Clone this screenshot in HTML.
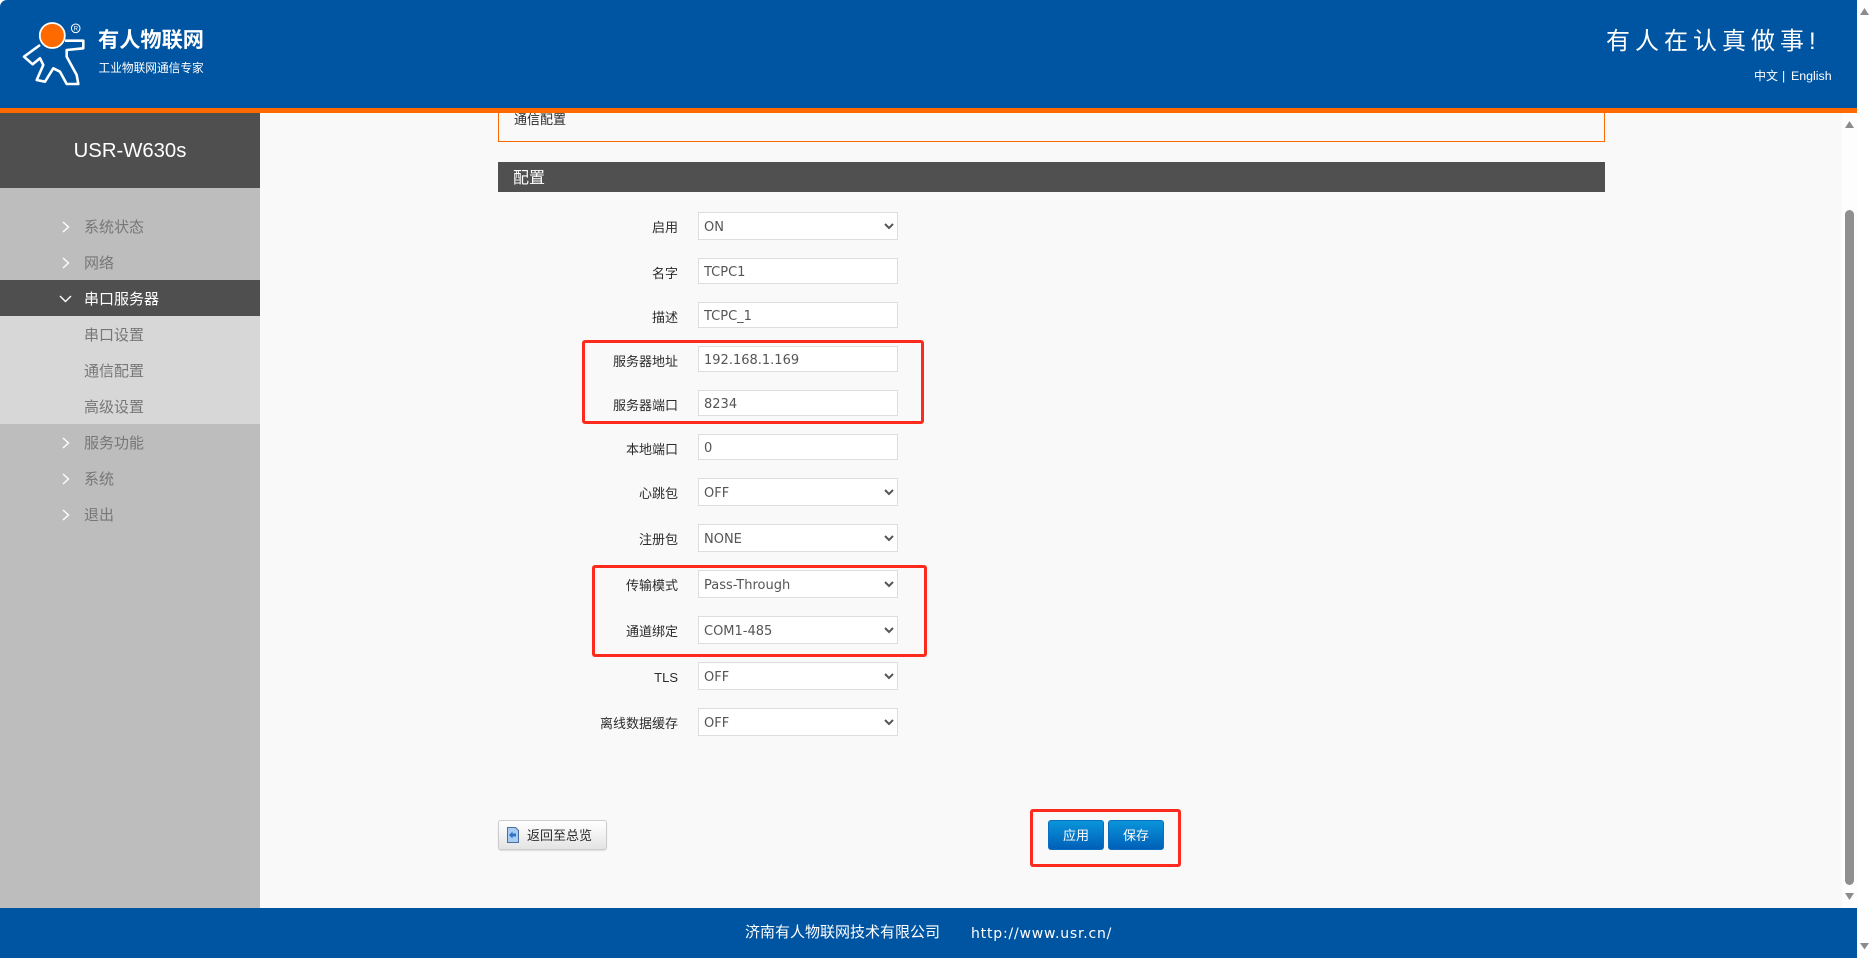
<!DOCTYPE html>
<html lang="zh-CN">
<head>
<meta charset="utf-8">
<title>USR-W630s</title>
<style>
html,body{margin:0;padding:0;width:1872px;height:958px;overflow:hidden;background:#fff;}
body{position:relative;font-family:"Liberation Sans","Noto Sans CJK SC",sans-serif;color:#333;}
.a{position:absolute;white-space:nowrap;}
#hdr{left:0;top:0;width:1857px;height:108px;background:#0055a2;border-radius:7px 0 0 0;}
#org{left:0;top:108px;width:1857px;height:5px;background:#ff6a00;}
#main{left:260px;top:113px;width:1582px;height:795px;background:#f9f9f9;}
#sb1{left:1842px;top:113px;width:15px;height:795px;background:#fdfdfd;}
#side{left:0;top:113px;width:260px;height:795px;background:#bdbdbd;}
#ttl{left:0;top:114px;width:260px;height:74px;background:#4f4f4f;color:#fff;font-size:20.300px;line-height:75px;text-align:center;box-shadow:0 -1px 0 #4f4f4f;}
#ftr{left:0;top:908px;width:1857px;height:50px;background:#0055a2;}
.m{left:0;width:260px;height:36px;line-height:36px;font-size:15px;color:#777;}
.m span{position:absolute;left:84px;top:2px;}
.m svg{position:absolute;left:58px;top:11px;}
.l{left:400px;width:278px;text-align:right;font-size:13px;line-height:20px;height:20px;color:#2b2b2b;margin-top:1px;}
.f{left:698px;width:200px;box-sizing:border-box;border:1px solid #ddd;background:#fff;margin:0;font-family:"DejaVu Sans",sans-serif;font-size:13px;color:#555;outline:none;border-radius:0;}
input.f{height:26px;padding:2px 0 0 5px;}
select.f{height:28px;padding:2px 0 0 1px;}
.r{box-sizing:border-box;border:3px solid #ff2a1e;border-radius:3px;}
.b{top:820px;height:30px;width:56px;box-sizing:border-box;border:1px solid #0a6fc0;border-radius:3px;background:linear-gradient(#0a95da,#005fb8);color:#fff;font-size:13px;line-height:30px;text-align:center;}
</style>
</head>
<body>
<div class="a" id="main"></div>
<div class="a" id="sb1"></div>

<div class="a" style="left:498px;top:100px;width:1107px;height:42px;box-sizing:border-box;border:1px solid #ff6a00;border-top:0;"></div>
<div class="a" style="left:514px;top:110px;font-size:13px;line-height:20px;color:#2b2b2b;">通信配置</div>
<div class="a" id="org"></div>
<div class="a" id="hdr"></div>

<svg class="a" style="left:0;top:0" width="120" height="100" viewBox="0 0 120 100">
<path d="M40 45 24 56.700 32.700 64.300 40 58.300 43.300 65 36.700 80 45 81.700 53.300 68.300 60 71.700 66.700 84 78.300 84 76.700 75 66.700 56.700 66.700 50 83.300 48.300 83.300 40.700 65 40.700" fill="none" stroke="#fff" stroke-width="2.600" stroke-linejoin="round"/>
<circle cx="52.300" cy="35.500" r="12.500" fill="#ff6a00" stroke="#fff" stroke-width="1.800"/>
<circle cx="75.700" cy="28.300" r="4.300" fill="none" stroke="#fff" stroke-width="1"/>
<text x="75.700" y="30.600" font-size="6.200" fill="#fff" text-anchor="middle" font-family="Liberation Sans">R</text>
</svg>
<div class="a" style="left:98px;top:27px;font-size:21.200px;line-height:28px;font-weight:700;color:#fff;">有人物联网</div>
<div class="a" style="left:98.500px;top:59px;font-size:11.700px;line-height:20px;color:#fff;">工业物联网通信专家</div>
<div class="a" style="left:1606px;top:27px;font-size:24px;line-height:30px;letter-spacing:5px;color:#fff;">有人在认真做事!</div>
<div class="a" style="left:1754px;top:66px;font-size:12px;line-height:20px;color:#fff;">中文</div>
<div class="a" style="left:1782px;top:66px;font-size:12.400px;line-height:20px;color:#fff;">|</div>
<div class="a" style="left:1791px;top:66px;font-size:12.400px;line-height:20px;color:#fff;">English</div>

<div class="a" id="side"></div>
<div class="a" id="ttl">USR-W630s</div>

<div class="a m" style="top:208px;"><svg width="14" height="16" viewBox="0 0 14 16"><path d="M5 3l5.500 5-5.500 5" fill="none" stroke="#fff" stroke-width="1.400"/></svg><span>系统状态</span></div>
<div class="a m" style="top:244px;"><svg width="14" height="16" viewBox="0 0 14 16"><path d="M5 3l5.500 5-5.500 5" fill="none" stroke="#fff" stroke-width="1.400"/></svg><span>网络</span></div>
<div class="a m" style="top:280px;background:#4f4f4f;color:#fff;"><svg width="14" height="16" viewBox="0 0 14 16"><path d="M2 5l5.500 5.500L13 5" fill="none" stroke="#fff" stroke-width="1.400"/></svg><span>串口服务器</span></div>
<div class="a m" style="top:316px;background:#d7d7d7;"><span>串口设置</span></div>
<div class="a m" style="top:352px;background:#d7d7d7;"><span>通信配置</span></div>
<div class="a m" style="top:388px;background:#d7d7d7;"><span>高级设置</span></div>
<div class="a m" style="top:424px;"><svg width="14" height="16" viewBox="0 0 14 16"><path d="M5 3l5.500 5-5.500 5" fill="none" stroke="#fff" stroke-width="1.400"/></svg><span>服务功能</span></div>
<div class="a m" style="top:460px;"><svg width="14" height="16" viewBox="0 0 14 16"><path d="M5 3l5.500 5-5.500 5" fill="none" stroke="#fff" stroke-width="1.400"/></svg><span>系统</span></div>
<div class="a m" style="top:496px;"><svg width="14" height="16" viewBox="0 0 14 16"><path d="M5 3l5.500 5-5.500 5" fill="none" stroke="#fff" stroke-width="1.400"/></svg><span>退出</span></div>

<div class="a" style="left:498px;top:162px;width:1107px;height:30px;background:#505050;"></div>
<div class="a" style="left:513px;top:168px;font-size:16px;line-height:22px;color:#fff;">配置</div>

<div class="a l" style="top:217px;">启用</div>
<select class="a f" style="top:212px;"><option>ON</option></select>
<div class="a l" style="top:263px;">名字</div>
<input class="a f" style="top:258px;" value="TCPC1">
<div class="a l" style="top:307px;">描述</div>
<input class="a f" style="top:302px;" value="TCPC_1">
<div class="a l" style="top:351px;">服务器地址</div>
<input class="a f" style="top:346px;" value="192.168.1.169">
<div class="a l" style="top:395px;">服务器端口</div>
<input class="a f" style="top:390px;" value="8234">
<div class="a l" style="top:439px;">本地端口</div>
<input class="a f" style="top:434px;" value="0">
<div class="a l" style="top:483px;">心跳包</div>
<select class="a f" style="top:478px;"><option>OFF</option></select>
<div class="a l" style="top:529px;">注册包</div>
<select class="a f" style="top:524px;"><option>NONE</option></select>
<div class="a l" style="top:575px;">传输模式</div>
<select class="a f" style="top:570px;"><option>Pass-Through</option></select>
<div class="a l" style="top:621px;">通道绑定</div>
<select class="a f" style="top:616px;"><option>COM1-485</option></select>
<div class="a l" style="top:667px;">TLS</div>
<select class="a f" style="top:662px;"><option>OFF</option></select>
<div class="a l" style="top:713px;">离线数据缓存</div>
<select class="a f" style="top:708px;"><option>OFF</option></select>

<div class="a r" style="left:582px;top:340px;width:342px;height:84px;"></div>
<div class="a r" style="left:592px;top:565px;width:335px;height:92px;"></div>
<div class="a r" style="left:1030px;top:809px;width:151px;height:58px;"></div>

<div class="a" style="left:498px;top:820px;width:109px;height:30px;box-sizing:border-box;border:1px solid #ccc;border-radius:3px;background:linear-gradient(#fff,#e4e4e4);box-shadow:0 1px 1px #ddd;"></div>
<svg class="a" style="left:506px;top:827px" width="14" height="16" viewBox="0 0 14 16">
<path d="M1.500 .5h8l3 3v12h-11z" fill="#a9cdf2" stroke="#4a6f9c"/>
<path d="M10 6.500H6.500V4.500L3 8l3.500 3.500V9.500H10z" fill="#2f74c4"/>
</svg>
<div class="a" style="left:527px;top:826px;font-size:13px;line-height:20px;color:#2b2b2b;">返回至总览</div>

<div class="a b" style="left:1048px;">应用</div>
<div class="a b" style="left:1108px;">保存</div>

<div class="a" id="ftr"></div>
<div class="a" style="left:745px;top:923px;font-size:15px;line-height:20px;color:#fff;">济南有人物联网技术有限公司</div>
<div class="a" style="left:971px;top:924px;font-family:'DejaVu Sans',sans-serif;font-size:14px;letter-spacing:.8px;line-height:20px;color:#fff;">http://www.usr.cn/</div>

<svg class="a" style="left:1842px;top:0" width="30" height="958" viewBox="0 0 30 958">
<path d="M18 15l4.500-7 4.500 7z" fill="#8c8c8c"/>
<path d="M18 943h9l-4.500 6.500z" fill="#8c8c8c"/>
<path d="M3 128l4.500-7 4.500 7z" fill="#8c8c8c"/>
<path d="M3 893h9l-4.500 7z" fill="#8c8c8c"/>
<rect x="3" y="210" width="9" height="675" rx="4.500" fill="#8f8f8f"/>
</svg>
</body>
</html>
